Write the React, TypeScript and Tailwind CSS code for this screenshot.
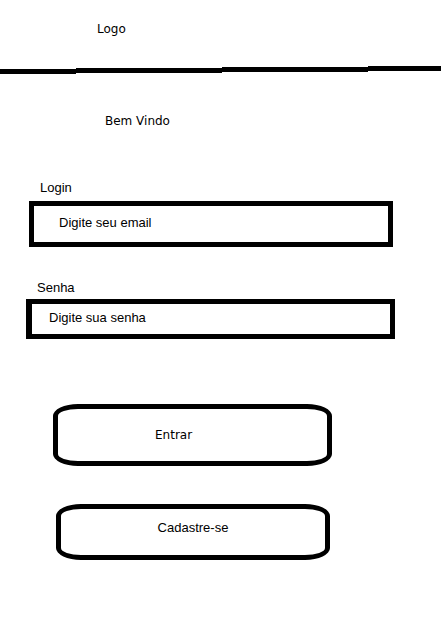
const dejavu = "block font-['DejaVu_Sans',sans-serif] text-[12px] leading-[14px] text-black";
const liberation = "block font-['Liberation_Sans',Arial,sans-serif] text-[13px] leading-[15px] text-black";

// linha desenhada à mão, em degraus, abaixo do logo
function SketchLine() {
  return (
    <div className="mt-[30px] flex h-[8px] w-full items-start">
      <div className="mt-[3px] h-[5px] w-[76px] bg-black" />
      <div className="mt-[2px] h-[5px] w-[146px] bg-black" />
      <div className="mt-[1px] h-[5px] w-[146px] bg-black" />
      <div className="h-[5px] flex-1 bg-black" />
    </div>
  );
}

export default function App() {
  return (
    <div className="flex h-[631px] w-[441px] flex-col items-start overflow-hidden bg-white">
      <div className={`ml-[97px] mt-[22px] ${dejavu}`}>Logo</div>

      <SketchLine />

      <div className={`ml-[105px] mt-[40px] ${dejavu}`}>Bem Vindo</div>

      <label className={`ml-[40px] mt-[52px] ${liberation}`}>Login</label>
      <div className="ml-[29px] mt-[6px] h-[46px] w-[364px] border-[5px] border-black pl-[25px] pt-[9px]">
        <span className={liberation}>Digite seu email</span>
      </div>

      <label className={`ml-[37px] mt-[33px] ${liberation}`}>Senha</label>
      <div className="ml-[26px] mt-[4px] h-[40px] w-[369px] border-[5px] border-l-[6px] border-black pl-[17px] pt-[6px]">
        <span className={liberation}>Digite sua senha</span>
      </div>

      <button className="ml-[53px] mt-[65px] flex h-[62px] w-[279px] items-start rounded-[25px/12px] border-[5px] border-black pl-[97px] pt-[19px]">
        <span className={dejavu}>Entrar</span>
      </button>

      <button className="ml-[56px] mt-[38px] flex h-[56px] w-[274px] items-start justify-center rounded-[25px/12px] border-[5px] border-black pt-[11px]">
        <span className={liberation}>Cadastre-se</span>
      </button>
    </div>
  );
}
